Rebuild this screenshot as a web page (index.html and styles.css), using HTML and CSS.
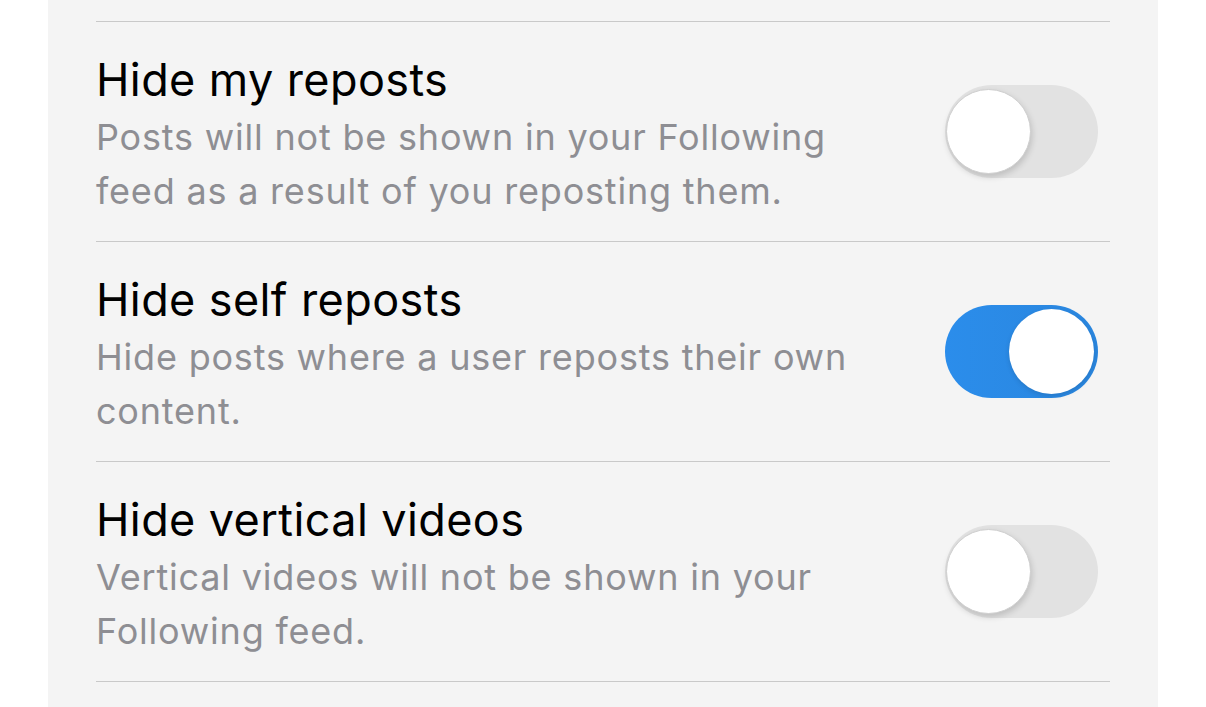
FILE: index.html
```html
<!DOCTYPE html>
<html lang="en">
<head>
    <meta charset="UTF-8">
    <meta name="viewport" content="width=device-width, initial-scale=1.0">
    <title>Following feed preferences</title>
    <link rel="stylesheet" href="styles.css">
</head>
<body>
    <div class="panel">
        <ul class="pref-list">
            <li class="pref-item">
                <div class="pref-text">
                    <div class="pref-title">Hide my reposts</div>
                    <div class="pref-desc">Posts will not be shown in your Following feed as a result of you reposting them.</div>
                </div>
                <span class="toggle"><span class="knob"></span></span>
            </li>
            <li class="pref-item">
                <div class="pref-text">
                    <div class="pref-title">Hide self reposts</div>
                    <div class="pref-desc">Hide posts where a user reposts their own content.</div>
                </div>
                <span class="toggle on"><span class="knob"></span></span>
            </li>
            <li class="pref-item">
                <div class="pref-text">
                    <div class="pref-title">Hide vertical videos</div>
                    <div class="pref-desc">Vertical videos will not be shown in your Following feed.</div>
                </div>
                <span class="toggle"><span class="knob"></span></span>
            </li>
        </ul>
    </div>
</body>
</html>
```

FILE: styles.css
```css
body {
    margin: 0;
    background-color: #fff;
    font-family: "Inter", "Liberation Sans", sans-serif;
}

.panel {
    margin: 0 48px;
    height: 707px;
    background-color: #f4f4f4;
    padding: 21px 48px 0;
    box-sizing: border-box;
}

.pref-list {
    list-style: none;
    margin: 0;
    padding: 0;
    border-top: 1px solid #c9c9c9;
}

.pref-item {
    display: flex;
    align-items: center;
    justify-content: space-between;
    height: 220px;
    box-sizing: border-box;
    padding: 0 12px 0 0;
    border-bottom: 1px solid #c9c9c9;
}

.pref-text {
    width: 780px;
    padding-top: 7px;
}

.pref-title {
    font-size: 45px;
    line-height: 56px;
    color: #000;
    letter-spacing: 0.4px;
}

.pref-desc {
    margin-top: 2px;
    font-size: 36px;
    line-height: 54px;
    color: #8e8e93;
    letter-spacing: 0.8px;
}

/* 開關 */
.toggle {
    position: relative;
    width: 153px;
    height: 93px;
    border-radius: 47px;
    background-color: #e2e2e2;
    flex-shrink: 0;
}

.toggle .knob {
    position: absolute;
    top: 4px;
    left: 1px;
    width: 85px;
    height: 85px;
    border-radius: 50%;
    background-color: #fff;
    border: 1px solid #cfcfcf;
    box-sizing: border-box;
    box-shadow: 1px 3px 6px rgba(0,0,0,0.16);
}

.toggle.on {
    background: linear-gradient(to right, #2b8deb, #2a86de);
}

.toggle.on .knob {
    left: auto;
    right: 4px;
    border: none;
    box-shadow: 0 2px 5px rgba(0,0,0,0.12);
}
```
